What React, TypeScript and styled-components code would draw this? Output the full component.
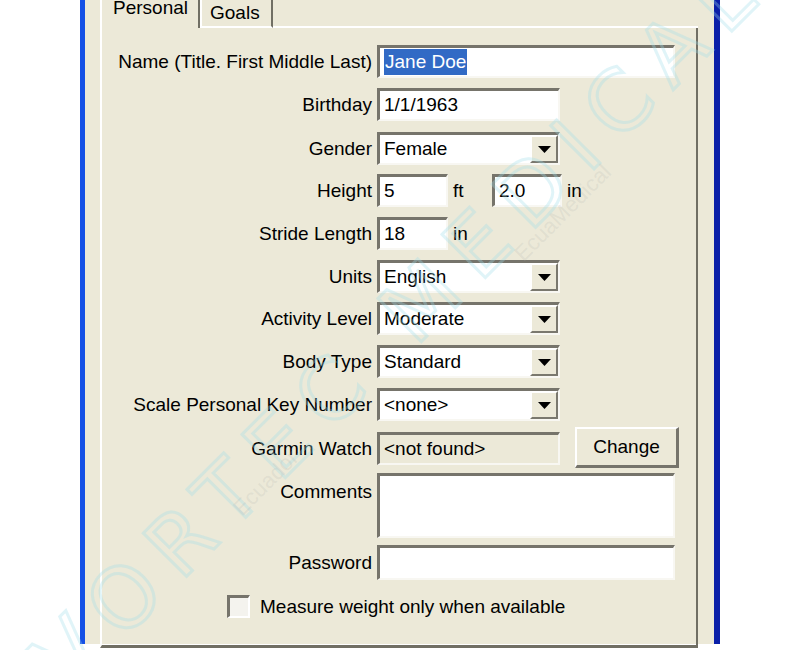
import React from "react";
import styled, { createGlobalStyle } from "styled-components";

const GlobalStyle = createGlobalStyle`
  html, body {
    margin: 0;
    padding: 0;
    background: #ffffff;
    overflow: hidden;
  }
  body {
    font-family: "Liberation Sans", Arial, sans-serif;
    font-size: 19px;
    color: #000;
  }
`;

const Page = styled.div`
  position: relative;
  width: 800px;
  height: 650px;
  overflow: hidden;
`;

const Window = styled.div`
  margin-left: 80px;
  width: 640px;
  height: 650px;
  box-sizing: border-box;
  border-left: 5px solid #1450e6;
  border-right: 6px solid #0a1fa8;
  background: #ece9d8;
  padding: 0 16px 0 15px;
`;

const TabStrip = styled.div`
  display: flex;
  align-items: flex-end;
  margin-top: -6px;
  height: 34px;
`;

const Tab = styled.div<{ $active?: boolean }>`
  box-sizing: border-box;
  height: ${(p) => (p.$active ? "34px" : "30px")};
  padding: ${(p) => (p.$active ? "4px 10px 0 11px" : "5px 11px 0 8px")};
  border-left: 2px solid #ffffff;
  border-right: 2px solid #716f64;
  border-bottom: ${(p) => (p.$active ? "none" : "2px solid #ffffff")};
  background: #ece9d8;
  line-height: 20px;
  white-space: nowrap;
`;

const TabFill = styled.div`
  flex: 1;
  align-self: stretch;
  border-bottom: 2px solid #ffffff;
`;

const Panel = styled.div`
  box-sizing: border-box;
  width: 598px;
  height: 620px;
  border-left: 2px solid #ffffff;
  border-right: 2px solid #716f64;
  border-bottom: 3px solid #716f64;
  padding-top: 17px;
`;

const Row = styled.div<{ $mt?: number }>`
  display: grid;
  grid-template-columns: 270px 1fr;
  column-gap: 5px;
  align-items: center;
  margin-top: ${(p) => p.$mt ?? 10}px;
`;

const Label = styled.div<{ $top?: boolean }>`
  text-align: right;
  white-space: nowrap;
  align-self: ${(p) => (p.$top ? "start" : "center")};
  padding-top: ${(p) => (p.$top ? "8px" : "0")};
`;

const Controls = styled.div`
  display: flex;
  align-items: center;
`;

const Field = styled.div<{ $w: number; $h?: number; $readonly?: boolean }>`
  box-sizing: border-box;
  width: ${(p) => p.$w}px;
  height: ${(p) => p.$h ?? 33}px;
  border-top: 3px solid #76746b;
  border-left: 3px solid #76746b;
  border-bottom: 2px solid #f8f7f2;
  border-right: 2px solid #f8f7f2;
  background: ${(p) => (p.$readonly ? "#ece9d8" : "#ffffff")};
  display: flex;
  align-items: ${(p) => (p.$h && p.$h > 40 ? "flex-start" : "center")};
  padding-left: 4px;
  white-space: nowrap;
  overflow: hidden;
`;

const Selected = styled.span`
  background: #316ac5;
  color: #ffffff;
  padding: 2px 1px;
`;

const Unit = styled.span<{ $w: number }>`
  display: inline-block;
  width: ${(p) => p.$w}px;
  padding-left: 5px;
  box-sizing: border-box;
`;

const SelectBox = styled(Field)`
  padding-right: 0;
  justify-content: space-between;
`;

const DropButton = styled.div`
  box-sizing: border-box;
  width: 28px;
  height: 100%;
  background: #ece9d8;
  border-top: 2px solid #ffffff;
  border-left: 2px solid #ffffff;
  border-bottom: 2px solid #7a786e;
  border-right: 2px solid #7a786e;
  display: flex;
  align-items: center;
  justify-content: center;
`;

const Button = styled.div`
  box-sizing: border-box;
  width: 104px;
  height: 41px;
  margin: -5px 0 -3px 15px;
  background: #ece9d8;
  border-top: 2px solid #ffffff;
  border-left: 2px solid #ffffff;
  border-bottom: 3px solid #76746b;
  border-right: 3px solid #76746b;
  display: flex;
  align-items: center;
  justify-content: center;
`;

const CheckRow = styled.div`
  display: flex;
  align-items: center;
  margin-top: 15px;
  padding-left: 125px;
`;

const CheckBox = styled.div`
  box-sizing: border-box;
  width: 23px;
  height: 23px;
  border-top: 3px solid #76746b;
  border-left: 3px solid #76746b;
  border-bottom: 2px solid #ffffff;
  border-right: 2px solid #ffffff;
  background: #f4f3ee;
  margin-right: 10px;
`;

const Watermark = styled.div`
  position: absolute;
  left: 400px;
  top: 322px;
  transform: translate(-50%, -50%) rotate(-45deg);
  font-family: "DejaVu Sans", sans-serif;
  font-size: 84px;
  letter-spacing: 18px;
  white-space: nowrap;
  color: transparent;
  -webkit-text-stroke: 3px rgba(160, 222, 232, 0.32);
  pointer-events: none;
`;

const SmallMark = styled.div<{ $x: number; $y: number }>`
  position: absolute;
  left: ${(p) => p.$x}px;
  top: ${(p) => p.$y}px;
  transform: rotate(-45deg);
  font-size: 22px;
  color: rgba(170, 170, 170, 0.18);
  pointer-events: none;
  white-space: nowrap;
`;

function Arrow() {
  return (
    <svg width="13" height="7" viewBox="0 0 13 7">
      <polygon points="0,0 13,0 6.5,7" fill="#000" />
    </svg>
  );
}

function Select({ value }: { value: string }) {
  return (
    <SelectBox $w={183}>
      <span>{value}</span>
      <DropButton>
        <Arrow />
      </DropButton>
    </SelectBox>
  );
}

export default function App() {
  return (
    <Page>
      <GlobalStyle />
      <Window>
        <TabStrip>
          <Tab $active>Personal</Tab>
          <Tab>Goals</Tab>
          <TabFill />
        </TabStrip>
        <Panel>
          <Row $mt={0}>
            <Label>Name (Title. First Middle Last)</Label>
            <Field $w={298}>
              <Selected>Jane Doe</Selected>
            </Field>
          </Row>
          <Row>
            <Label>Birthday</Label>
            <Field $w={183}>1/1/1963</Field>
          </Row>
          <Row $mt={11}>
            <Label>Gender</Label>
            <Select value="Female" />
          </Row>
          <Row $mt={9}>
            <Label>Height</Label>
            <Controls>
              <Field $w={71}>5</Field>
              <Unit $w={44}>ft</Unit>
              <Field $w={70}>2.0</Field>
              <Unit $w={30}>in</Unit>
            </Controls>
          </Row>
          <Row>
            <Label>Stride Length</Label>
            <Controls>
              <Field $w={71}>18</Field>
              <Unit $w={30}>in</Unit>
            </Controls>
          </Row>
          <Row>
            <Label>Units</Label>
            <Select value="English" />
          </Row>
          <Row $mt={9}>
            <Label>Activity Level</Label>
            <Select value="Moderate" />
          </Row>
          <Row>
            <Label>Body Type</Label>
            <Select value="Standard" />
          </Row>
          <Row>
            <Label>Scale Personal Key Number</Label>
            <Select value="<none>" />
          </Row>
          <Row $mt={11}>
            <Label>Garmin Watch</Label>
            <Controls>
              <Field $w={183} $readonly>
                &lt;not found&gt;
              </Field>
              <Button>Change</Button>
            </Controls>
          </Row>
          <Row $mt={8}>
            <Label $top>Comments</Label>
            <Field $w={298} $h={65} />
          </Row>
          <Row $mt={7}>
            <Label>Password</Label>
            <Field $w={298} $h={35} />
          </Row>
          <CheckRow>
            <CheckBox />
            <span>Measure weight only when available</span>
          </CheckRow>
        </Panel>
      </Window>
      <Watermark>VORTEC MEDICAL</Watermark>
      <SmallMark $x={225} $y={470}>Ecuador</SmallMark>
      <SmallMark $x={500} $y={200}>EcuaMedical</SmallMark>
    </Page>
  );
}
